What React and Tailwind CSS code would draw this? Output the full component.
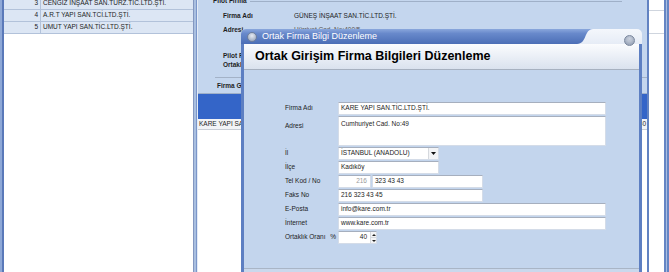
import React from 'react';

const leftRows = [
  { n: 3, name: 'CENGIZ İNŞAAT SAN.TURZ.TİC.LTD.ŞTİ.' },
  { n: 4, name: 'A.R.T YAPI SAN.TCİ.LTD.ŞTİ.' },
  { n: 5, name: 'UMUT YAPI SAN.TİC.LTD.ŞTİ.' },
];

const Box = ({ className = '', children }) => (
  <div className={`h-[13px] shrink-0 bg-white border border-[#d4dce8] border-t-[#a6afbe] flex items-center pl-[2px] ${className}`}>
    {children}
  </div>
);

const Row = ({ label, children, top = false }) => (
  <div className={`flex ${top ? 'items-start' : 'items-center'}`}>
    <div className={`w-[53px] shrink-0 ${top ? 'pt-[7px]' : ''}`}>{label}</div>
    {children}
  </div>
);

const LeftList = () => (
  <div className="w-[197px] h-full shrink-0 flex border-l-[2px] border-[#8ea8d7]">
    <div className="flex-1 flex flex-col bg-white border-l-[2px] border-[#5a79b9] border-r border-r-[#8397c0]">
      <div className="-mt-[2px]">
        {leftRows.map((r) => (
          <div key={r.n} className="flex h-[12px] bg-[#dce6f4] border-b border-[#b2c2da]">
            <div className="w-[37px] shrink-0 border-r border-[#b2c2da] flex items-center justify-end pr-[2px]">{r.n}</div>
            <div className="flex items-center pl-[2px] whitespace-nowrap">{r.name}</div>
          </div>
        ))}
      </div>
    </div>
    <div className="w-[3px] bg-[#a9bfe0] border-r border-[#7b96c9]" />
  </div>
);

const MiddlePanel = () => (
  <div className="w-[452px] h-full shrink-0 flex flex-col bg-[#c4d6ee] border-l border-[#e4ebf6] border-r-[2px] border-r-[#6283c2]">
    <div className="h-[79px] shrink-0 flex flex-col">
      <div className="-mt-[3px] h-[8px] flex items-center pl-[15px] pr-[25px]">
        <span className="font-bold whitespace-nowrap">Pilot Firma</span>
        <div className="flex-1 ml-[3px] border-t border-[#9fb0c8]" />
      </div>
      <div className="mt-[7px] h-[8px] flex items-center pl-[25px]">
        <span className="w-[71px] font-bold">Firma Adı</span>
        <span>GÜNEŞ İNŞAAT SAN.TİC.LTD.ŞTİ.</span>
      </div>
      <div className="mt-[6px] h-[8px] flex items-center pl-[25px]">
        <span className="w-[71px] font-bold">Adresi</span>
        <span className="text-[#555]">Hürriyet Cad. No:400/5</span>
      </div>
      <div className="mt-[18px] h-[8px] flex items-center pl-[25px] font-bold">Pilot Firma</div>
      <div className="mt-[1px] h-[8px] flex items-center pl-[25px] font-bold">Ortaklık</div>
      <div className="mt-[8px] ml-[17px] border-t border-[#a3b2c7]" />
    </div>
    <div className="flex-1 flex flex-col">
      <div className="h-[15px] shrink-0 flex items-center pl-[19px] font-bold border-b border-[#9fb0c8]">Firma Grubu</div>
      <div className="h-[25px] shrink-0 bg-[#3465c8]" />
      <div className="h-[11px] shrink-0 bg-[#f2f4f7] border-b border-[#c9ced6] flex items-center justify-between pl-[1px] pr-[1px]">
        <span>KARE YAPI SAN.TİC.LTD.ŞTİ.</span>
        <span>40</span>
      </div>
      <div className="flex-1 bg-white" />
    </div>
  </div>
);

const RightStrip = () => (
  <div className="flex-1 h-full flex bg-white">
    <div className="flex-1 flex flex-col">
      <div className="h-[11px] border-b border-[#cfd5de]" />
      <div className="h-[23px] border-b border-[#cfd5de]" />
    </div>
    <div className="w-[5px] border-x-[2px] border-[#6585c4] bg-[#a9bfe0]" />
  </div>
);

const Dialog = () => (
  <div className="absolute left-[241px] top-[29px] w-[401px] h-[250px] flex flex-col">
    <div className="relative h-[15px] shrink-0 rounded-t-[5px] overflow-hidden bg-gradient-to-b from-[#f4f7fc] to-[#e6ecf6]">
      <svg className="absolute inset-0" width="401" height="15" viewBox="0 0 401 15">
        <defs>
          <linearGradient id="tbar" x1="0" y1="0" x2="0" y2="1">
            <stop offset="0" stopColor="#8aa7dc" />
            <stop offset="0.3" stopColor="#6889cb" />
            <stop offset="1" stopColor="#4b6eb6" />
          </linearGradient>
        </defs>
        <path d="M0 0H352C343 0 346 15 336 15H0Z" fill="url(#tbar)" />
      </svg>
      <div className="relative h-full flex items-center pl-[6px] gap-[5px]">
        <span className="w-[10px] h-[10px] rounded-full border border-[#6f7f9c] bg-[radial-gradient(circle_at_50%_35%,#e6ebf3,#8d9bb4)]" />
        <span className="text-[9px] text-white whitespace-nowrap">Ortak Firma Bilgi Düzenleme</span>
      </div>
    </div>
    <div className="flex-1 flex flex-col border-x-[3px] border-[#5d7fc2] bg-[#c3d5ed]">
      <div className="h-[26px] shrink-0 border-b border-[#a7b1c0] bg-gradient-to-b from-[#fbfcfe] to-[#dae2ee] flex items-center pl-[11px] text-[12.5px] font-bold text-black whitespace-nowrap">
        Ortak Girişim Firma Bilgileri Düzenleme
      </div>
      <div className="flex-1 pt-[32px] pl-[41px] flex flex-col gap-[1px] text-[#1c1c1c]">
        <Row label="Firma Adı">
          <Box className="w-[268px]">KARE YAPI SAN.TİC.LTD.ŞTİ.</Box>
        </Row>
        <Row label="Adresi" top>
          <div className="w-[268px] h-[30px] bg-white border border-[#d4dce8] border-t-[#a6afbe] pl-[2px] pt-[4px]">Cumhuriyet Cad. No:49</div>
        </Row>
        <Row label="İl">
          <Box className="w-[101px] justify-between pr-0">
            <span>İSTANBUL (ANADOLU)</span>
            <span className="w-[10px] h-[11px] bg-[#f3f4f6] border-l border-[#d6d9de] flex items-center justify-center">
              <svg width="5" height="3" viewBox="0 0 5 3"><path d="M0 0H5L2.5 3Z" fill="#111" /></svg>
            </span>
          </Box>
        </Row>
        <Row label="İlçe">
          <Box className="w-[101px]">Kadıköy</Box>
        </Row>
        <Row label="Tel Kod / No">
          <div className="flex gap-[1px]">
            <Box className="w-[33px] bg-[#e9e9e9] justify-end pr-[3px] text-[#9a9a9a]">216</Box>
            <Box className="w-[111px]">323 43 43</Box>
          </div>
        </Row>
        <Row label="Faks No">
          <Box className="w-[145px]">216 323 43 45</Box>
        </Row>
        <Row label="E-Posta">
          <Box className="w-[268px]">info@kare.com.tr</Box>
        </Row>
        <Row label="İnternet">
          <Box className="w-[268px]">www.kare.com.tr</Box>
        </Row>
        <Row
          label={
            <div className="flex justify-between items-center pr-[2px] whitespace-nowrap">
              <span>Ortaklık Oranı</span>
              <span>%</span>
            </div>
          }
        >
          <Box className="w-[39px] justify-end pr-0">
            <span className="pr-[3px]">40</span>
            <span className="w-[6px] h-[11px] flex flex-col bg-[#f3f4f6] border-l border-[#d6d9de]">
              <span className="flex-1 flex items-center justify-center border-b border-[#d6d9de]">
                <svg width="4" height="2" viewBox="0 0 4 2"><path d="M0 2H4L2 0Z" fill="#222" /></svg>
              </span>
              <span className="flex-1 flex items-center justify-center">
                <svg width="4" height="2" viewBox="0 0 4 2"><path d="M0 0H4L2 2Z" fill="#222" /></svg>
              </span>
            </span>
          </Box>
        </Row>
      </div>
      <div className="h-[11px] shrink-0 border-t border-[#a9b5c6] bg-[#cad8ec]" />
    </div>
    <span className="absolute top-[6px] left-[383px] w-[11px] h-[11px] rounded-full border border-[#7a879d] bg-[radial-gradient(circle_at_50%_35%,#cfd6e2,#8996ac)] flex items-center justify-center text-[7px] text-[#b9c2d2]">×</span>
  </div>
);

export default function App() {
  return (
    <div className="relative w-[669px] h-[272px] overflow-hidden flex bg-white font-['Liberation_Sans',Arial,sans-serif] text-[6.5px] leading-none text-[#1e1e1e]">
      <LeftList />
      <MiddlePanel />
      <RightStrip />
      <Dialog />
    </div>
  );
}
